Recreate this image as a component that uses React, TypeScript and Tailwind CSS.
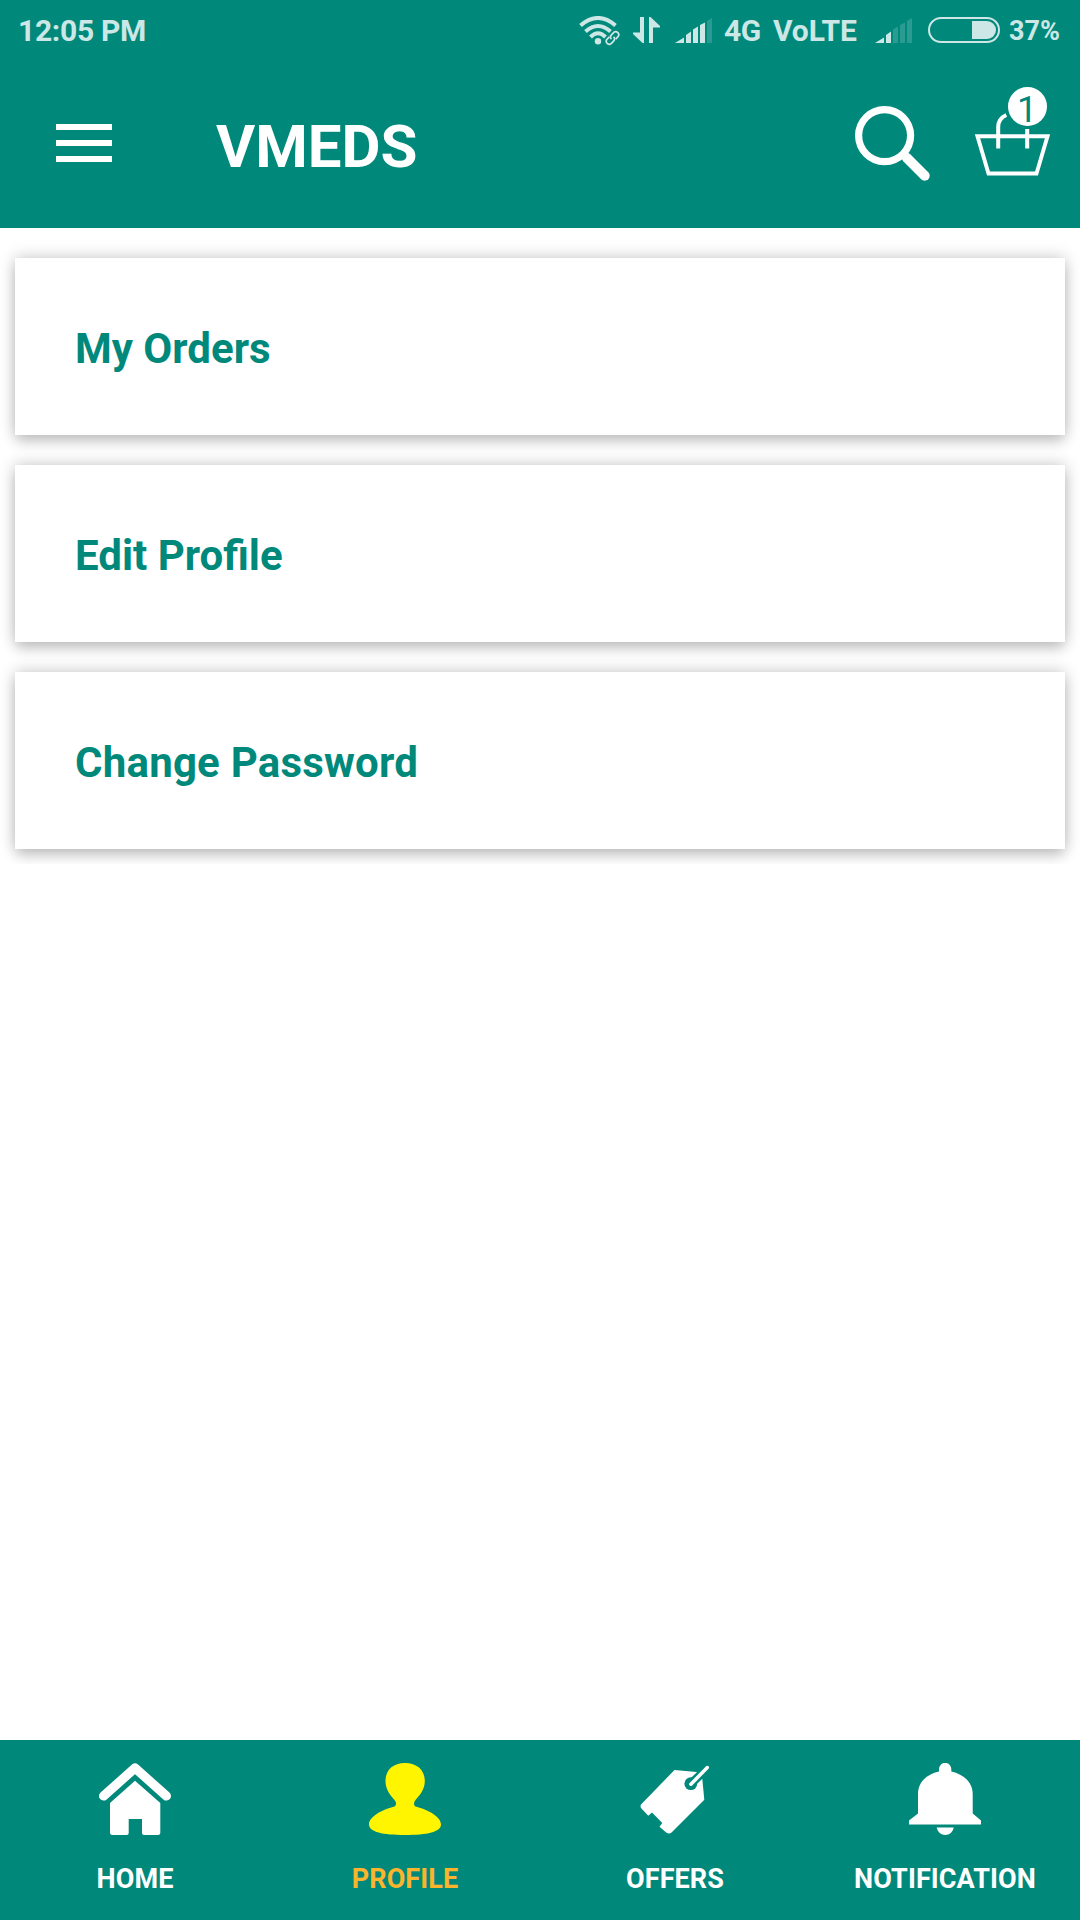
import React from "react";

const BARS = [
  "M0 25 L9 19.5 V25 Z",
  "M11 25 V17 L16 13.5 V25 Z",
  "M18 25 V11.5 L23 8.5 V25 Z",
  "M25 25 V7 L30 4.5 V25 Z",
  "M32 25 V3 L37 0 V25 Z",
];

function Signal({ level }: { level: number }) {
  return (
    <svg width="37" height="25" viewBox="0 0 37 25" fill="currentColor" className="block shrink-0">
      {BARS.map((d, i) => (
        <path key={i} d={d} opacity={i < level ? 1 : 0.2} />
      ))}
    </svg>
  );
}

function StatusBar() {
  return (
    <div className="flex h-[60px] items-center pl-[18px] text-[#cce7e5]">
      <span className="w-[561px] pt-0.5 text-[30px] leading-[60px] font-bold tracking-[-0.3px] whitespace-nowrap">12:05 PM</span>
      <svg width="42" height="30" viewBox="0 0 42 30" fill="none" stroke="currentColor" className="mt-px block shrink-0">
        <path d="M1.5 9.5 Q19 -5.5 36.5 9.5" strokeWidth="4" />
        <path d="M6.5 15.5 Q19 4.500 31.500 15.5" strokeWidth="4" />
        <path d="M11.500 21 Q19 13.500 26.500 21" strokeWidth="4" />
        <circle cx="19" cy="25.300" r="3.200" fill="currentColor" stroke="none" />
        <g transform="rotate(-45 33.500 22)" strokeWidth="1.700">
          <path d="M32 19 H29 a3 3 0 0 0 0 6 H32 a3 3 0 0 0 3 -3" />
          <path d="M35 25 H38 a3 3 0 0 0 0 -6 H35 a3 3 0 0 0 -3 3" />
        </g>
      </svg>
      <svg width="27" height="26" viewBox="0 0 27 26" fill="currentColor" className="ml-3 block shrink-0">
        <path d="M7 0 H11 V26 H9.500 L0 17 V15.500 H7 Z" />
        <path d="M16 26 H20 V10.500 H27 V9 L17.500 0 H16 Z" />
      </svg>
      <div className="mt-px ml-[15px]">
        <Signal level={4} />
      </div>
      <span className="ml-3 w-[49px] pt-0.5 text-[30px] leading-[60px] font-bold tracking-[-0.5px] whitespace-nowrap">4G</span>
      <span className="w-[103px] pt-0.5 text-[30px] leading-[60px] font-bold tracking-[-0.1px] whitespace-nowrap">VoLTE</span>
      <div className="mt-px -ml-px">
        <Signal level={2} />
      </div>
      <svg width="72" height="26" viewBox="0 0 72 26" className="ml-4 block shrink-0">
        <rect x="1" y="1" width="70" height="24" rx="12" fill="none" stroke="currentColor" strokeWidth="2" />
        <path d="M44 4 H59 a9 9 0 0 1 0 18 H44 Z" fill="currentColor" />
      </svg>
      <span className="ml-[9px] pt-0.5 text-[27px] leading-[60px] font-bold whitespace-nowrap">37%</span>
    </div>
  );
}

function AppBar() {
  return (
    <div className="flex h-[168px] items-start pl-14 text-white">
      <button aria-label="Menu" className="mt-16 flex w-14 flex-col gap-[10px]">
        <span className="h-[6px] bg-white" />
        <span className="h-[6px] bg-white" />
        <span className="h-[6px] bg-white" />
      </button>
      <h1 className="mt-[52px] ml-[104px] w-[639px] text-[60px] leading-[70px] font-bold">VMEDS</h1>
      <svg width="75" height="75" viewBox="0 0 75 75" fill="none" stroke="white" className="mt-[46px] block shrink-0">
        <circle cx="29.600" cy="29.600" r="26" strokeWidth="7.200" />
        <path d="M48 48 L52 52" strokeWidth="7.500" />
        <path d="M52 52 L69.700 69.700" strokeWidth="10" strokeLinecap="round" />
      </svg>
      <div className="relative mt-[52px] ml-[45px] h-16 w-[75px] shrink-0">
        <svg width="75" height="64" viewBox="0 0 75 64" fill="none" stroke="white" strokeWidth="3.900" className="block">
          <path d="M2.500 24.300 H72.500 L61.500 61.500 H13.500 Z" />
          <path d="M23.200 36.500 V15 C23.200 8 27 5 31.300 3" strokeWidth="4" />
          <path d="M52.200 17 V36.500" strokeWidth="4" />
        </svg>
        <span className="absolute -top-[25px] left-[32.500px] flex size-[39px] items-center justify-center rounded-full bg-white pt-[6px] text-[36px] leading-none text-[#00897b]">
          1
        </span>
      </div>
    </div>
  );
}

function HomeIcon() {
  return (
    <svg width="72" height="72" viewBox="0 0 72 72" fill="white" className="block">
      <path d="M4.600 33 L36 5 L67.400 33" fill="none" stroke="white" strokeWidth="9.200" strokeLinecap="round" strokeLinejoin="round" />
      <path d="M36 17.800 L61.300 40 V69.500 Q61.300 72 58.800 72 H45 Q43 72 43 70 V56 H29.700 V70 Q29.700 72 27.700 72 H13.500 Q11 72 11 69.500 V40 Z" />
    </svg>
  );
}

function ProfileIcon() {
  return (
    <svg width="72" height="72" viewBox="0 0 72 72" fill="#fff500" className="block">
      <path d="M36 0 C48 0 55.800 7 55.800 18 C55.800 26 51 32 46.500 37 C44.500 39.500 44.500 42 46.500 43.500 C60 47 72 54 72 61.500 C72 69 58 72 36 72 C14 72 0 69 0 61.500 C0 54 12 47 25.500 43.500 C27.500 42 27.500 39.500 25.500 37 C21 32 16.500 26 16.500 18 C16.500 7 24 0 36 0 Z" />
    </svg>
  );
}

function OffersIcon() {
  return (
    <svg width="72" height="72" viewBox="0 0 72 72" fill="white" className="block">
      <path d="M35.500 7 L57.500 9 L63.300 16 L65.300 36.800 L32.500 69.500 Q30 71.500 27.500 69.800 L20.500 63.700 L23.300 60 L13 49.500 L9.300 52.800 L2 45 Q1 43.300 2 41.500 Z" />
      <circle cx="51.800" cy="20.700" r="6.400" fill="#00897b" />
      <path d="M51.700 21 L69 4.500" stroke="#00897b" strokeWidth="8.500" />
      <path d="M51.900 21.200 L68.300 4.600" stroke="white" strokeWidth="3.500" strokeLinecap="round" />
    </svg>
  );
}

function BellIcon() {
  return (
    <svg width="72" height="72" viewBox="0 0 72 72" fill="white" className="block">
      <path d="M30 8.500 V6 a6 6 0 0 1 12.300 0 V8.500 C54 11 63.700 19 63.700 31 V50.500 L72 57.500 V61.500 H0 V57.500 L9 50.500 V31 C9 19 18 11 30 8.500 Z" />
      <path d="M27.700 64.500 H44.700 C44 69 40.500 72 36.200 72 C32 72 28.500 69 27.700 64.500 Z" />
    </svg>
  );
}

const CARDS = [
  { label: "My Orders", tracking: "tracking-normal" },
  { label: "Edit Profile", tracking: "tracking-normal" },
  { label: "Change Password", tracking: "tracking-[0.22px]" },
];

const TABS = [
  { label: "HOME", Icon: HomeIcon, color: "text-white" },
  { label: "PROFILE", Icon: ProfileIcon, color: "text-[#fbb42b]" },
  { label: "OFFERS", Icon: OffersIcon, color: "text-white" },
  { label: "NOTIFICATION", Icon: BellIcon, color: "text-white" },
];

export default function App() {
  return (
    <div className="flex h-[1920px] w-[1080px] flex-col overflow-hidden bg-white font-['Roboto',sans-serif]">
      <header className="h-[228px] shrink-0 bg-[#00897b]">
        <StatusBar />
        <AppBar />
      </header>
      <main className="flex-1">
        <div className="flex flex-col gap-[30px] overflow-hidden px-[15px] pt-[30px] pb-[15px]">
          {CARDS.map(({ label, tracking }) => (
            <button
              key={label}
              className="flex h-[177px] items-center bg-white pt-1 pl-[60px] text-left text-[42px] leading-[50px] font-bold text-[#00897b] shadow-[0_0_15px_rgba(0,0,0,0.24),0_9px_12px_-1px_rgba(0,0,0,0.13)]"
            >
              <span className={tracking}>{label}</span>
            </button>
          ))}
        </div>
      </main>
      <nav className="grid h-[180px] shrink-0 grid-cols-4 bg-[#00897b]">
        {TABS.map(({ label, Icon, color }) => (
          <button key={label} className={color}>
            <span className="flex h-[180px] flex-col items-center pt-[23px]">
              <Icon />
              <span className="mt-7 text-[27px] leading-8 font-bold tracking-[0.1px]">{label}</span>
            </span>
          </button>
        ))}
      </nav>
    </div>
  );
}
